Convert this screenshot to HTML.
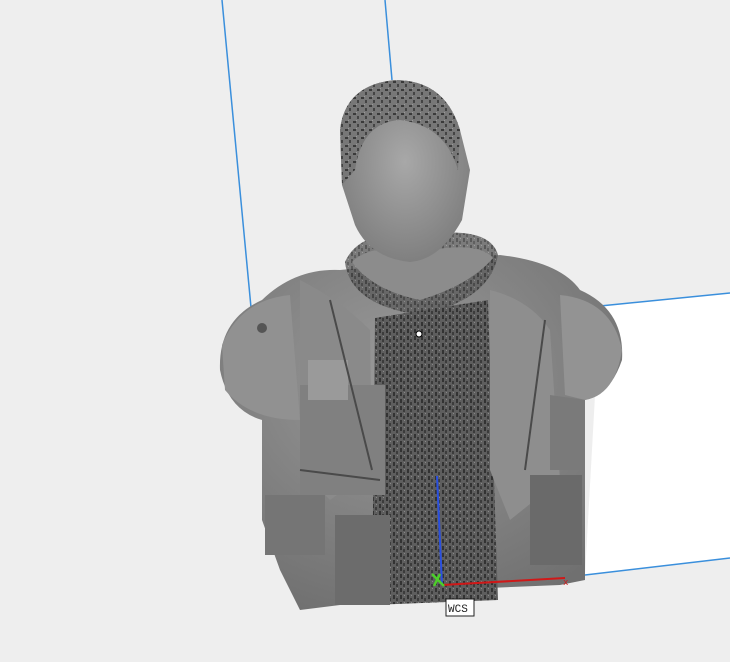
<!DOCTYPE html>
<html><head><style>
body{margin:0;width:730px;height:662px;overflow:hidden;background:#eeeeee;font-family:"Liberation Mono",monospace}
svg{position:absolute;left:0;top:0}
</style></head><body>
<svg width="730" height="662" viewBox="0 0 730 662">
<defs>
<radialGradient id="g" cx="0.45" cy="0.35" r="0.7"><stop offset="0" stop-color="#9a9a9a"/><stop offset="1" stop-color="#707070"/></radialGradient>
<radialGradient id="h" cx="0.5" cy="0.45" r="0.6"><stop offset="0" stop-color="#a8a8a8"/><stop offset="1" stop-color="#7c7c7c"/></radialGradient>
<pattern id="t" width="7" height="7" patternUnits="userSpaceOnUse"><rect width="7" height="7" fill="#5e5e5e"/><rect x="1" y="0" width="2" height="4" fill="#333"/><rect x="4" y="3" width="2" height="3" fill="#3c3c3c"/><rect x="5" y="0" width="1" height="1" fill="#888"/></pattern>
<pattern id="hair" width="8" height="8" patternUnits="userSpaceOnUse"><rect width="8" height="8" fill="#777"/><rect x="1" y="1" width="3" height="2" fill="#3a3a3a"/><rect x="5" y="4" width="2" height="3" fill="#444"/><rect x="4" y="0" width="1" height="1" fill="#999"/></pattern>
</defs>
<polygon points="600,306 730,293 730,558 585,575" fill="#ffffff"/>
<line x1="222" y1="0" x2="252" y2="318" stroke="#3a8fdc" stroke-width="1.5"/>
<line x1="385" y1="0" x2="392" y2="80" stroke="#3a8fdc" stroke-width="1.5"/>
<line x1="600" y1="306" x2="730" y2="293" stroke="#3a8fdc" stroke-width="1.5"/>
<line x1="585" y1="575" x2="730" y2="558" stroke="#3a8fdc" stroke-width="1.5"/>
<path d="M262,300 Q295,268 340,270 L500,255 Q560,262 580,290 Q625,310 622,360 Q610,395 585,400 L585,580 L560,585 L440,590 L380,600 L300,610 L280,570 L262,520 L262,420 Q228,410 220,370 Q218,320 262,300Z" fill="url(#g)"/>
<path d="M375,318 L488,300 L498,600 L372,605Z" fill="url(#t)"/>
<path d="M300,280 Q340,300 370,330 L372,470 L330,500 L300,470Z" fill="#8a8a8a"/>
<path d="M490,290 Q530,300 550,330 L560,480 L510,520 L490,470Z" fill="#8e8e8e"/>
<path d="M222,345 Q240,300 290,295 L300,420 Q250,420 225,390Z" fill="#919191"/>
<circle cx="262" cy="328" r="5" fill="#555"/>
<path d="M560,295 Q612,300 622,350 Q615,395 585,400 L565,395Z" fill="#939393"/>
<rect x="300" y="385" width="85" height="110" fill="#808080"/>
<rect x="308" y="360" width="40" height="40" fill="#9a9a9a"/>
<path d="M330,300 L372,470 M545,320 L525,470 M300,470 L380,480" stroke="#4a4a4a" stroke-width="2" fill="none"/>
<rect x="530" y="475" width="52" height="90" fill="#6a6a6a"/>
<rect x="265" y="495" width="60" height="60" fill="#757575"/>
<rect x="335" y="515" width="55" height="90" fill="#6c6c6c"/>
<path d="M550,395 L585,400 L585,470 L550,470Z" fill="#7a7a7a"/>
<path d="M345,262 Q360,228 420,235 Q490,225 498,255 Q490,300 420,315 Q350,305 345,262Z" fill="url(#t)" opacity="0.8"/>
<path d="M352,262 Q372,242 420,252 Q478,240 493,258 Q470,285 420,300 Q372,290 352,262Z" fill="#8c8c8c"/>
<path d="M340,130 Q345,85 395,80 Q445,80 460,130 L470,170 L462,220 Q440,260 410,262 Q370,258 355,225 L342,185Z" fill="url(#h)"/>
<path d="M340,130 Q345,85 395,80 Q445,80 460,130 L458,170 Q445,125 400,120 Q362,122 355,170 L342,185Z" fill="url(#hair)"/>
<circle cx="419" cy="334" r="3" fill="#fff" stroke="#000" stroke-width="1"/>
<line x1="437" y1="476" x2="442" y2="585" stroke="#2a50e0" stroke-width="2"/>
<line x1="442" y1="585" x2="565" y2="578" stroke="#d01818" stroke-width="2"/>
<text x="563" y="585" font-size="9" fill="#d01818" font-family="Liberation Mono">x</text>
<path d="M432,574 L444,586 M440,574 L434,586" stroke="#4ccf2a" stroke-width="2.5"/>
<rect x="446" y="599" width="28" height="17" fill="#fff" stroke="#222" stroke-width="1"/>
<text x="448" y="612" font-size="11" fill="#222" font-family="Liberation Mono">WCS</text>
</svg>
</body></html>
